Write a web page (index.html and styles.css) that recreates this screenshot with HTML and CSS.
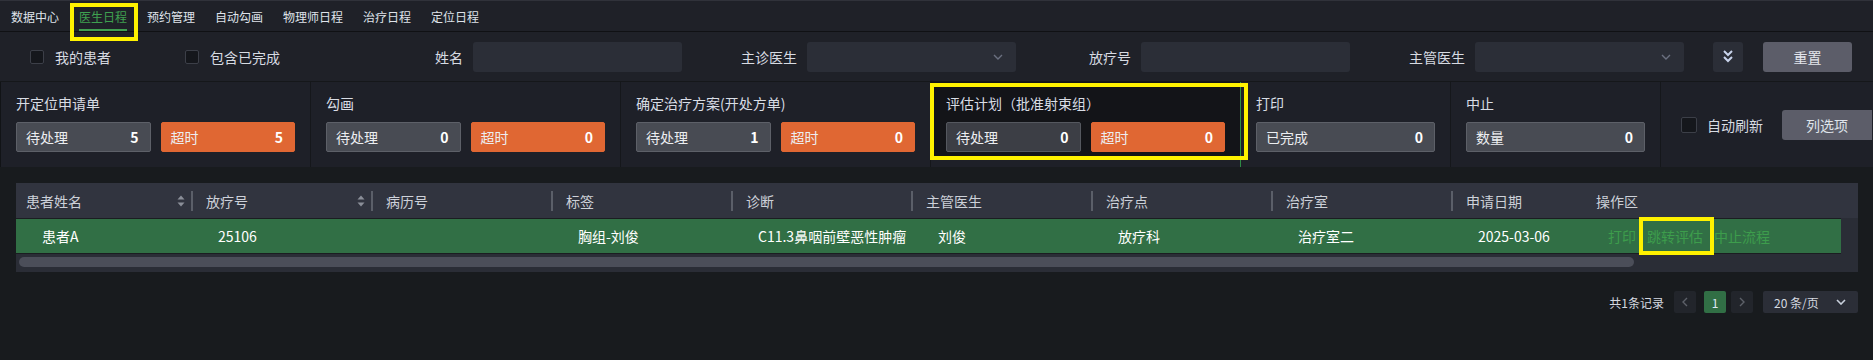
FILE: index.html
```html
<!DOCTYPE html>
<html lang="zh-CN">
<head>
    <meta charset="UTF-8">
    <meta name="viewport" content="width=device-width, initial-scale=1.0">
    <title>医生日程</title>
    <link rel="stylesheet" href="styles.css">
</head>
<body>

<!-- 顶部导航 -->
<div class="topnav">
    <a class="nav-item">数据中心</a>
    <a class="nav-item active">医生日程</a>
    <a class="nav-item">预约管理</a>
    <a class="nav-item">自动勾画</a>
    <a class="nav-item">物理师日程</a>
    <a class="nav-item">治疗日程</a>
    <a class="nav-item">定位日程</a>
</div>

<!-- 筛选条件 -->
<div class="filter">
    <label class="check check-mine"><span class="box"></span>我的患者</label>
    <label class="check check-done"><span class="box"></span>包含已完成</label>
    <div class="field">
        <span class="field-label">姓名</span>
        <input class="input" type="text">
    </div>
    <div class="field">
        <span class="field-label">主诊医生</span>
        <div class="input select">
            <svg width="10" height="6" viewBox="0 0 10 6"><path d="M1 1l4 4 4-4" fill="none" stroke="#6b7080" stroke-width="1.4"/></svg>
        </div>
    </div>
    <div class="field">
        <span class="field-label">放疗号</span>
        <input class="input" type="text">
    </div>
    <div class="field">
        <span class="field-label">主管医生</span>
        <div class="input select">
            <svg width="10" height="6" viewBox="0 0 10 6"><path d="M1 1l4 4 4-4" fill="none" stroke="#6b7080" stroke-width="1.4"/></svg>
        </div>
    </div>
    <button class="toggle-btn">
        <svg width="12" height="15" viewBox="0 0 12 15"><path d="M2 2l4 4 4-4M2 8l4 4 4-4" fill="none" stroke="#c9d4ec" stroke-width="2"/></svg>
    </button>
    <button class="reset-btn">重置</button>
</div>

<!-- 统计面板 -->
<div class="stats">
    <div class="stat">
        <div class="stat-title">开定位申请单</div>
        <div class="stat-boxes">
            <div class="count"><span>待处理</span><b>5</b></div>
            <div class="count over"><span>超时</span><b>5</b></div>
        </div>
    </div>
    <div class="stat">
        <div class="stat-title">勾画</div>
        <div class="stat-boxes">
            <div class="count"><span>待处理</span><b>0</b></div>
            <div class="count over"><span>超时</span><b>0</b></div>
        </div>
    </div>
    <div class="stat">
        <div class="stat-title">确定治疗方案(开处方单)</div>
        <div class="stat-boxes">
            <div class="count"><span>待处理</span><b>1</b></div>
            <div class="count over"><span>超时</span><b>0</b></div>
        </div>
    </div>
    <div class="stat active">
        <div class="stat-title">评估计划（批准射束组）</div>
        <div class="stat-boxes">
            <div class="count"><span>待处理</span><b>0</b></div>
            <div class="count over"><span>超时</span><b>0</b></div>
        </div>
    </div>
    <div class="stat narrow">
        <div class="stat-title">打印</div>
        <div class="stat-boxes">
            <div class="count"><span>已完成</span><b>0</b></div>
        </div>
    </div>
    <div class="stat narrow">
        <div class="stat-title">中止</div>
        <div class="stat-boxes">
            <div class="count"><span>数量</span><b>0</b></div>
        </div>
    </div>
    <div class="stat tools">
        <label class="check"><span class="box box-lg"></span>自动刷新</label>
        <button class="cols-btn">列选项</button>
    </div>
</div>

<!-- 表格 -->
<div class="grid">
    <div class="grid-head">
        <div class="th c1 sep">患者姓名
            <svg class="sort" width="8" height="12" viewBox="0 0 8 12"><path d="M4 0.5L7.5 4.5H0.5Z M4 11.5L7.5 7.5H0.5Z" fill="#8b8f99"/></svg>
        </div>
        <div class="th sep">放疗号
            <svg class="sort" width="8" height="12" viewBox="0 0 8 12"><path d="M4 0.5L7.5 4.5H0.5Z M4 11.5L7.5 7.5H0.5Z" fill="#8b8f99"/></svg>
        </div>
        <div class="th sep">病历号</div>
        <div class="th sep">标签</div>
        <div class="th sep">诊断</div>
        <div class="th sep">主管医生</div>
        <div class="th sep">治疗点</div>
        <div class="th sep">治疗室</div>
        <div class="th c9">申请日期</div>
        <div class="th c10">操作区</div>
    </div>
    <div class="grid-body">
        <div class="tr">
            <div class="td c1">患者A</div>
            <div class="td">25106</div>
            <div class="td"></div>
            <div class="td">胸组-刘俊</div>
            <div class="td">C11.3鼻咽前壁恶性肿瘤</div>
            <div class="td">刘俊</div>
            <div class="td">放疗科</div>
            <div class="td">治疗室二</div>
            <div class="td c9">2025-03-06</div>
            <div class="td c10 ops">
                <span>打印</span><span>跳转评估</span><span>中止流程</span>
            </div>
        </div>
        <div class="scroll"><div class="thumb"></div></div>
    </div>
</div>

<!-- 分页 -->
<div class="pager">
    <span class="total">共1条记录</span>
    <span class="pg-btn prev">
        <svg width="6" height="10" viewBox="0 0 6 10"><path d="M5 1L1 5l4 4" fill="none" stroke="#5d6169" stroke-width="1.4"/></svg>
    </span>
    <span class="pg-btn current">1</span>
    <span class="pg-btn next">
        <svg width="6" height="10" viewBox="0 0 6 10"><path d="M1 1l4 4-4 4" fill="none" stroke="#5d6169" stroke-width="1.4"/></svg>
    </span>
    <span class="pg-size">20 条/页
        <svg width="10" height="6" viewBox="0 0 10 6"><path d="M1 1l4 4 4-4" fill="none" stroke="#c9d0dc" stroke-width="1.6"/></svg>
    </span>
</div>

<!-- 标注框 -->
<div class="mark mark-nav"></div>
<div class="mark mark-stat"></div>
<div class="mark mark-op"></div>

</body>
</html>
```

FILE: styles.css
```css
* {
    box-sizing: border-box;
}
body {
    margin: 0;
    height: 360px;
    overflow: hidden;
    position: relative;
    background-color: #181b1e;
    font-family: "Noto Sans CJK SC", "Noto Sans", sans-serif;
    font-size: 14px;
    color: #d7dbe2;
}

/* 顶部导航 */
.topnav {
    display: flex;
    height: 32px;
    padding-left: 1px;
    background-color: #1f2128;
    border-top: 1px solid #30323a;
    border-bottom: 1px solid #101114;
}
.nav-item {
    position: relative;
    padding: 4px 10px 0;
    font-size: 12px;
    line-height: 24px;
    color: #dfe3ea;
}
.nav-item.active {
    color: #3fa050;
}
.nav-item.active::after {
    content: "";
    position: absolute;
    left: 10px;
    right: 10px;
    bottom: 0;
    height: 2px;
    background-color: #3fa050;
}

/* 筛选条件 */
.filter {
    display: flex;
    align-items: center;
    height: 50px;
    padding-left: 30px;
    background-color: #1f2128;
    border-bottom: 1px solid #15171a;
}
.check {
    display: flex;
    align-items: center;
    color: #d7dbe2;
}
.check-mine {
    width: 155px;
}
.check-done {
    width: 163px;
}
.box {
    width: 14px;
    height: 14px;
    margin-right: 11px;
    background-color: #15171c;
    border: 1px solid #3c3f48;
    border-radius: 2px;
}
.box-lg {
    width: 16px;
    height: 16px;
    margin-right: 10px;
}
.field {
    display: flex;
    align-items: center;
}
.field-label {
    width: 115px;
    margin-right: 10px;
    text-align: right;
}
.input {
    width: 209px;
    height: 30px;
    background-color: #2b2e37;
    border: none;
    border-radius: 3px;
    outline: none;
}
.select {
    display: flex;
    align-items: center;
    justify-content: flex-end;
    padding-right: 13px;
}
.toggle-btn {
    display: flex;
    align-items: center;
    justify-content: center;
    width: 30px;
    height: 30px;
    margin-left: 29px;
    padding: 0;
    background-color: #2b2e37;
    border: none;
    border-radius: 3px;
}
.reset-btn {
    width: 89px;
    height: 30px;
    margin-left: 20px;
    background-color: #5c5d69;
    border: none;
    border-radius: 3px;
    font-family: inherit;
    font-size: 14px;
    color: #e3e6ec;
}

/* 统计面板 */
.stats {
    display: flex;
    height: 85px;
    background-color: #1e2028;
    border-left: 1px solid #111316;
}
.stat {
    width: 310px;
    padding: 11px 15px 15px;
    border-right: 1px solid #15171b;
}
.stat.narrow {
    width: 210px;
}
.stat.active {
    background-color: #131418;
    box-shadow: inset 0 -8px 0 #1e2028;
    border-right-color: #2e8a45;
}
.stat.tools {
    flex: 1;
    display: flex;
    align-items: center;
    padding: 0 0 0 20px;
    border-right: none;
}
.stat-title {
    line-height: 20px;
    margin-bottom: 9px;
    color: #d9dde5;
}
.stat-boxes {
    display: flex;
    gap: 10px;
}
.count {
    flex: 1;
    display: flex;
    align-items: center;
    justify-content: space-between;
    height: 30px;
    padding: 0 11px 0 9px;
    background-color: #484b53;
    border: 1px solid #5d6068;
    border-radius: 2px;
    color: #eceef1;
}
.count b {
    color: #fff;
    font-weight: 700;
}
.count.over {
    background-color: #e06733;
    border-color: #e06733;
}
.stat.active .count {
    background-color: #3c3e45;
    border-color: #55585f;
}
.stat.active .count.over {
    background-color: #e06733;
    border-color: #e06733;
}
.cols-btn {
    width: 90px;
    height: 30px;
    margin-left: 19px;
    background-color: #5c5d69;
    border: none;
    border-radius: 3px 0 0 3px;
    font-family: inherit;
    font-size: 14px;
    color: #dfe3ea;
}

/* 表格 */
.grid {
    margin: 16px 15px 0 16px;
}
.grid-head {
    display: flex;
    height: 35px;
    background-color: #31343f;
}
.th {
    position: relative;
    display: flex;
    align-items: center;
    width: 180px;
    padding-left: 14px;
    color: #cdd1d9;
}
.th.c1 {
    width: 176px;
    padding-left: 10px;
}
.th.sep::after {
    content: "";
    position: absolute;
    right: -1px;
    top: 8px;
    bottom: 7px;
    width: 2px;
    background-color: #5b5f69;
}
.sort {
    margin-left: auto;
    margin-right: 7px;
}
.c9 {
    width: 130px;
}
.c10 {
    flex: 1;
}
.grid-body {
    background-color: #2a2d36;
}
.tr {
    display: flex;
    width: calc(100% - 17px);
    height: 36px;
    padding-left: 12px;
    background-color: #316f45;
    border-top: 1px solid #1b1d21;
    border-bottom: 1px solid #1b1d21;
}
.td {
    display: flex;
    align-items: center;
    width: 180px;
    padding-left: 14px;
    color: #fff;
    white-space: nowrap;
}
.td.c1 {
    width: 176px;
}
.td.c9 {
    width: 130px;
}
.ops span {
    margin-right: 11px;
    color: #3d9d4c;
}
.scroll {
    height: 18px;
    padding: 3px 0 0 3px;
}
.thumb {
    width: 1615px;
    height: 10px;
    background-color: #4b4e59;
    border-radius: 5px;
}

/* 分页 */
.pager {
    display: flex;
    align-items: center;
    justify-content: flex-end;
    height: 22px;
    margin: 19px 15px 0 0;
    font-size: 12px;
    color: #d5d9e0;
}
.total {
    margin-right: 10px;
}
.pg-btn {
    display: flex;
    align-items: center;
    justify-content: center;
    width: 22px;
    height: 22px;
    background-color: #22252b;
    border-radius: 2px;
}
.pg-btn.current {
    margin: 0 5px 0 8px;
    background-color: #316f45;
    color: #dce8f5;
}
.pg-size {
    display: flex;
    align-items: center;
    justify-content: space-between;
    width: 95px;
    height: 22px;
    margin-left: 10px;
    padding: 0 12px 0 11px;
    background-color: #2b2e37;
    border-radius: 2px;
}

/* 标注框 */
.mark {
    position: absolute;
    border: 4px solid #fff200;
}
.mark-nav {
    left: 70px;
    top: 3px;
    width: 68px;
    height: 38px;
}
.mark-stat {
    left: 930px;
    top: 83px;
    width: 318px;
    height: 77px;
}
.mark-op {
    left: 1639px;
    top: 217px;
    width: 75px;
    height: 38px;
}
```
